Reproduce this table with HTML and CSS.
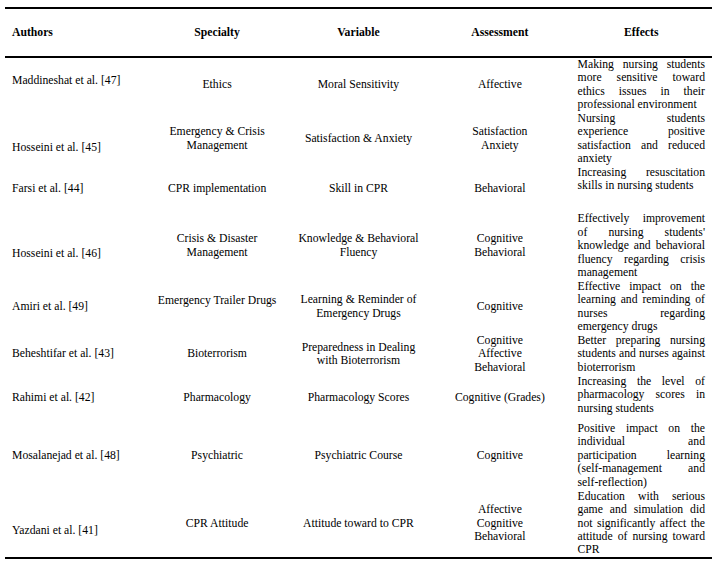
FILE: index.html
```html
<!DOCTYPE html>
<html>
<head>
<meta charset="utf-8">
<link rel="stylesheet" href="styles.css">
</head>
<body>
<table class="tbl">
  <colgroup><col><col><col><col><col></colgroup>
  <thead>
    <tr class="hd">
      <th class="left">Authors</th>
      <th>Specialty</th>
      <th>Variable</th>
      <th>Assessment</th>
      <th>Effects</th>
    </tr>
  </thead>
  <tbody>
    <tr class="r1">
      <td class="left up4">Maddineshat et al. [47]</td>
      <td>Ethics</td>
      <td>Moral Sensitivity</td>
      <td>Affective</td>
      <td class="eff"><span class="j">Making nursing students</span><span class="j">more sensitive toward</span><span class="j">ethics issues in their</span><span class="l">professional environment</span></td>
    </tr>
    <tr class="r2">
      <td class="left dn9">Hosseini et al. [45]</td>
      <td>Emergency &amp; Crisis<br>Management</td>
      <td>Satisfaction &amp; Anxiety</td>
      <td>Satisfaction<br>Anxiety</td>
      <td class="eff"><span class="j">Nursing students</span><span class="j">experience positive</span><span class="j">satisfaction and reduced</span><span class="l">anxiety</span></td>
    </tr>
    <tr class="r3">
      <td class="left">Farsi et al. [44]</td>
      <td>CPR implementation</td>
      <td>Skill in CPR</td>
      <td>Behavioral</td>
      <td class="eff top"><span class="j">Increasing resuscitation</span><span class="l">skills in nursing students</span></td>
    </tr>
    <tr class="r4">
      <td class="left dn8">Hosseini et al. [46]</td>
      <td>Crisis &amp; Disaster<br>Management</td>
      <td>Knowledge &amp; Behavioral<br>Fluency</td>
      <td>Cognitive<br>Behavioral</td>
      <td class="eff"><span class="j">Effectively improvement</span><span class="j">of nursing students'</span><span class="j">knowledge and behavioral</span><span class="j">fluency regarding crisis</span><span class="l">management</span></td>
    </tr>
    <tr class="r5">
      <td class="left">Amiri et al. [49]</td>
      <td class="up6">Emergency Trailer Drugs</td>
      <td>Learning &amp; Reminder of<br>Emergency Drugs</td>
      <td>Cognitive</td>
      <td class="eff"><span class="j">Effective impact on the</span><span class="j">learning and reminding of</span><span class="j">nurses regarding</span><span class="l">emergency drugs</span></td>
    </tr>
    <tr class="r6">
      <td class="left">Beheshtifar et al. [43]</td>
      <td>Bioterrorism</td>
      <td>Preparedness in Dealing<br>with Bioterrorism</td>
      <td>Cognitive<br>Affective<br>Behavioral</td>
      <td class="eff"><span class="j">Better preparing nursing</span><span class="j">students and nurses against</span><span class="l">bioterrorism</span></td>
    </tr>
    <tr class="r7">
      <td class="left">Rahimi et al. [42]</td>
      <td>Pharmacology</td>
      <td>Pharmacology Scores</td>
      <td>Cognitive (Grades)</td>
      <td class="eff top"><span class="j">Increasing the level of</span><span class="j">pharmacology scores in</span><span class="l">nursing students</span></td>
    </tr>
    <tr class="r8">
      <td class="left">Mosalanejad et al. [48]</td>
      <td>Psychiatric</td>
      <td>Psychiatric Course</td>
      <td>Cognitive</td>
      <td class="eff"><span class="j">Positive impact on the</span><span class="j">individual and</span><span class="j">participation learning</span><span class="j">(self-management and</span><span class="l">self-reflection)</span></td>
    </tr>
    <tr class="r9">
      <td class="left dn7">Yazdani et al. [41]</td>
      <td>CPR Attitude</td>
      <td>Attitude toward to CPR</td>
      <td>Affective<br>Cognitive<br>Behavioral</td>
      <td class="eff"><span class="j">Education with serious</span><span class="j">game and simulation did</span><span class="j">not significantly affect the</span><span class="j">attitude of nursing toward</span><span class="l">CPR</span></td>
    </tr>
  </tbody>
</table>
</body>
</html>
```

FILE: styles.css
```css
html, body {
  margin: 0;
  padding: 0;
  background: #ffffff;
}

body {
  padding: 7px 0 0 5px;
  font-family: "Liberation Serif", "Times New Roman", serif;
  font-size: 11.7px;
  line-height: 13.45px;
  color: #000000;
}

.tbl {
  width: 707px;
  border-collapse: collapse;
  table-layout: fixed;
  border-top: 2px solid #000;
  border-bottom: 2px solid #000;
}

.tbl th,
.tbl td {
  padding: 0 7px;
  text-align: center;
  vertical-align: middle;
  white-space: nowrap;
}

.tbl th {
  font-weight: bold;
  border-bottom: 2px solid #000;
}

.hd { height: 49px; }

.tbl .left {
  text-align: left;
}

.tbl td.eff {
  text-align: left;
}

.tbl td.top {
  vertical-align: top;
}

.j {
  display: block;
  text-align: justify;
  text-align-last: justify;
  white-space: normal;
}

.l {
  display: block;
  text-align: left;
}

.r1 { height: 54px; }
.r2 { height: 54px; }
.r3 { height: 46px; }
.r4 { height: 68px; }
.r5 { height: 53px; }
.r6 { height: 41px; }
.r7 { height: 47px; }
.r8 { height: 68px; }
.r9 { height: 67px; }

.tbl td.up4 { padding-bottom: 8px; }
.tbl td.up6 { padding-bottom: 12px; }
.tbl td.dn7 { padding-top: 14px; }
.tbl td.dn8 { padding-top: 16px; }
.tbl td.dn9 { padding-top: 18px; }
```
